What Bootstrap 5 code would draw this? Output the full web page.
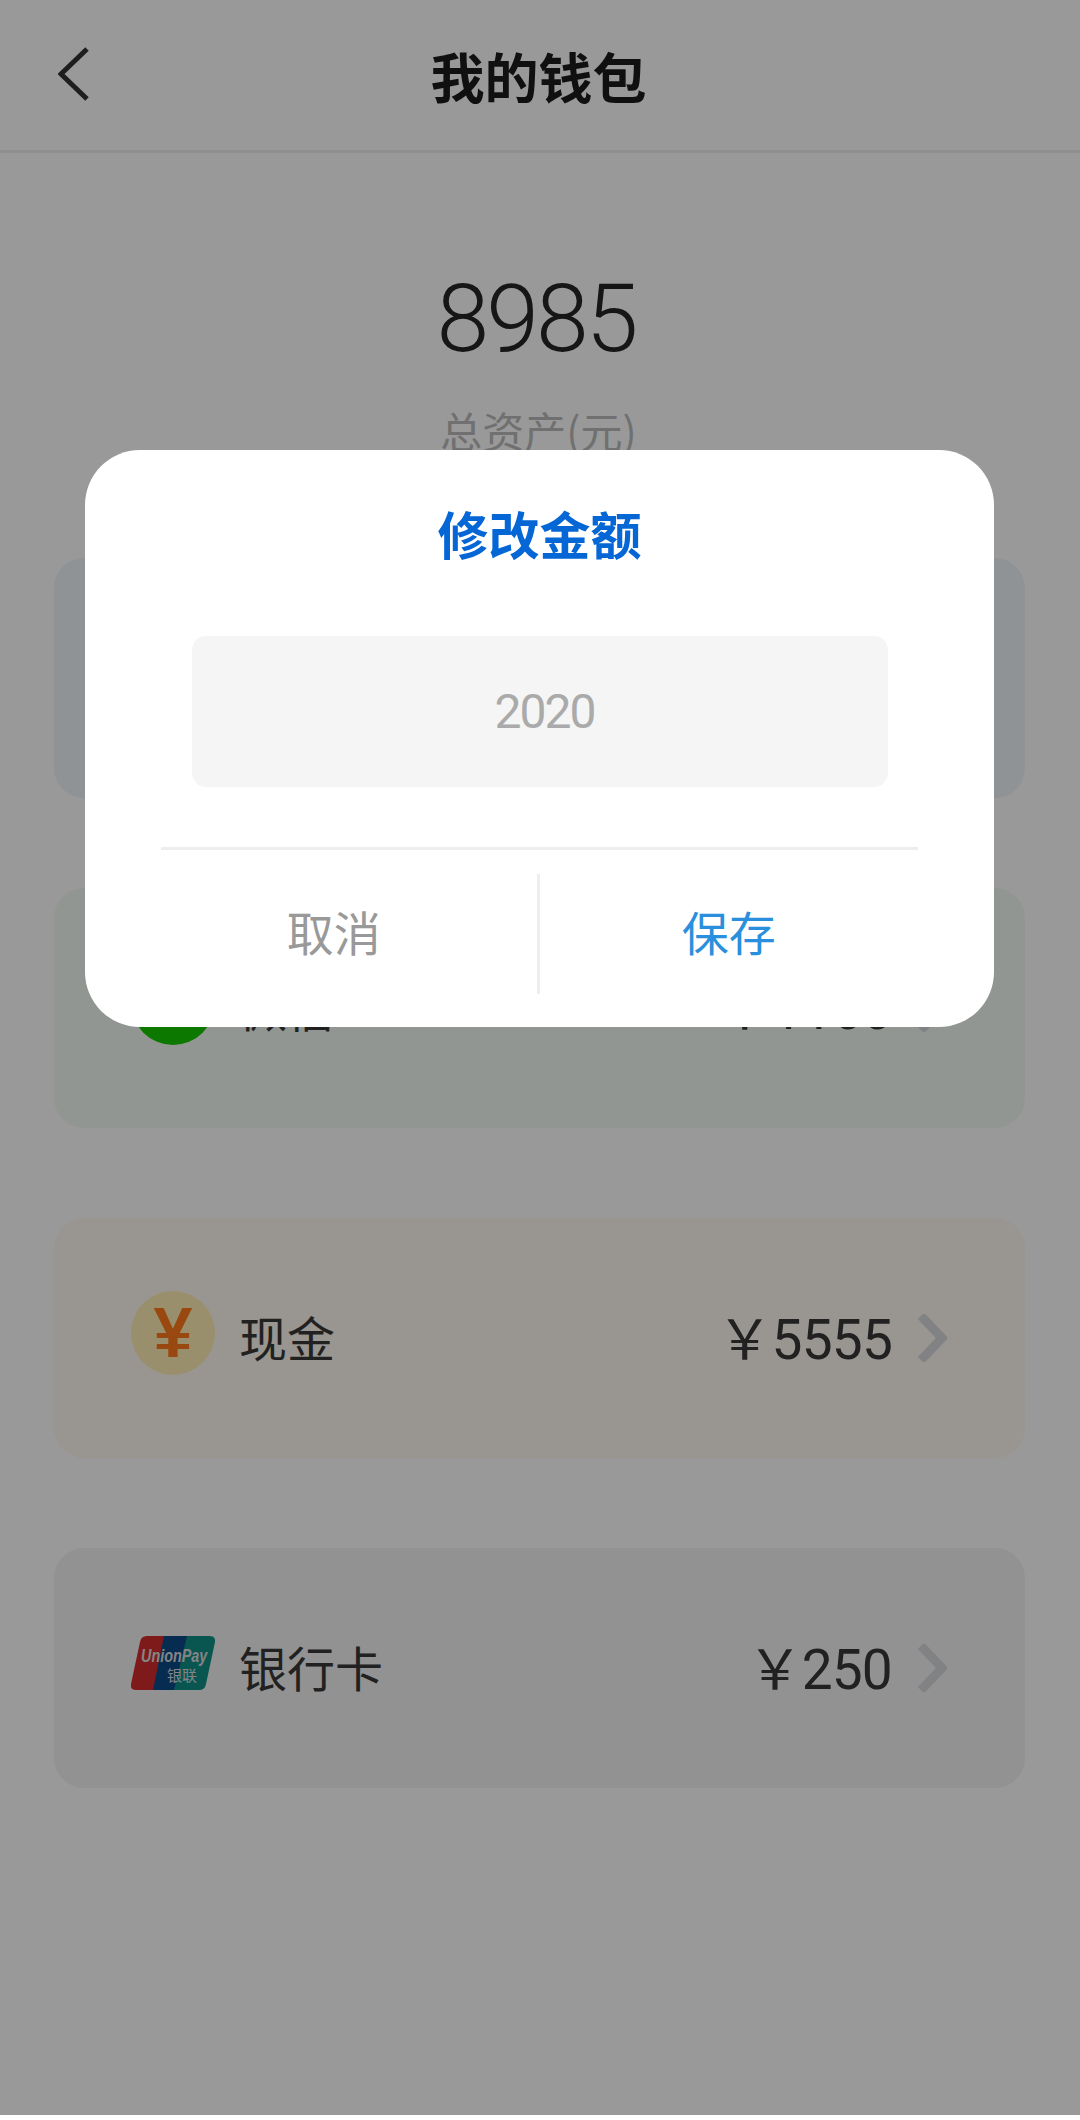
<!DOCTYPE html>
<html lang="zh-CN">
<head>
    <meta charset="UTF-8">
    <meta name="viewport" content="width=device-width, initial-scale=1.0">
    <title>我的钱包</title>
    <link href="https://cdn.jsdelivr.net/npm/bootstrap@5.3.0/dist/css/bootstrap.min.css" rel="stylesheet">
    <style>
        body {
            font-family: "Noto Sans CJK SC", "Noto Sans", sans-serif;
            background-color: #fff;
            color: #333;
        }
        .wallet-page { height: 2120px; overflow: hidden; }
        .top-bar {
            height: 153px;
            border-bottom: 3px solid #eeeeee;
            padding: 0 58px 2px 58px;
        }
        .top-side { flex: 1 1 0; }
        .top-title { font-size: 54px; font-weight: 700; line-height: 1; color: #1c1c1c; margin: 4px 0 0 -3px; }
        .total-box { height: 405px; padding-top: 111px; padding-right: 3px; }
        .total-num { font-family: Roboto, sans-serif; font-size: 95px; font-weight: 300; letter-spacing: -3px; line-height: 110px; color: #262626; padding-right: 5px; }
        .total-label { font-size: 42px; line-height: 56px; color: #bbbbbb; margin-top: 28px; }
        .cards-box { padding: 0 55px 0 54px; gap: 90px; }
        .money-card {
            height: 240px;
            border: 0;
            border-radius: 30px;
            padding: 0 78px 0 77px;
        }
        .money-card.blue-tint { background-color: #eff6fb; }
        .money-card.green-tint { background-color: #f2fbf3; }
        .money-card.orange-tint { background-color: #fff8f1; }
        .money-card.grey-tint { background-color: #f3f3f3; }
        .coin {
            width: 84px;
            height: 84px;
            border-radius: 50%;
            margin-bottom: 10px;
        }
        .coin-blue { background-color: #1a8fe3; color: #fff; font-size: 48px; font-weight: 700; }
        .coin-green { background-color: #16c800; }
        .coin-yen {
            background-color: #ffefb6;
            color: #ff7a1a;
            font-family: "Liberation Sans", sans-serif;
            font-size: 70px;
            font-weight: 700;
            line-height: 1;
        }
        .logo-union { margin-bottom: 10px; }
        .card-name { font-size: 48px; line-height: 1; margin-left: 24px; padding-bottom: 5px; color: #383838; }
        .card-sum {
            font-family: Roboto, "Noto Sans CJK SC", sans-serif;
            font-size: 55px;
            letter-spacing: -.8px;
            line-height: 1;
            color: #383838;
            margin-right: 25px;
            padding-top: 5px;
        }
        .cover {
            position: absolute;
            top: 0;
            left: 0;
            width: 100%;
            height: 2115px;
            background-color: rgba(0, 0, 0, .4);
            padding: 450px 1px 0 0;
        }
        .edit-box {
            width: 909px;
            height: 577px;
            background-color: #fff;
            border: 0;
            border-radius: 55px;
            padding: 0 76px;
        }
        .edit-title { font-size: 51px; font-weight: 700; line-height: 1; color: #0566d6; margin: 58px 0 77px; }
        .edit-input.form-control {
            width: 696px;
            height: 151px;
            margin: 0 auto 60px;
            padding: 0 0 0 10px;
            background-color: #f5f5f5;
            border: 0;
            border-radius: 14px;
            font-family: Roboto, sans-serif;
            font-size: 48px;
            letter-spacing: -2px;
            color: #aaaaaa;
        }
        .edit-actions { border-top: 3px solid #eeeeee; padding-top: 24px; }
        .edit-btn.btn {
            width: 50%;
            height: 120px;
            padding: 0 0 8px;
            border: 0;
            border-radius: 0;
            font-size: 47px;
            line-height: 1;
        }
        .edit-btn.btn-cancel { color: #999999; border-right: 3px solid #eeeeee; padding-right: 30px; }
        .edit-btn.btn-save { color: #2a8fdc; }
    </style>
</head>
<body>
    <div class="wallet-page position-relative">
        <!-- header -->
        <div class="top-bar d-flex align-items-center">
            <div class="top-side">
                <svg width="32" height="54" viewBox="0 0 32 54" class="d-block">
                    <polyline points="29,2 3,27 29,52" fill="none" stroke="#333" stroke-width="5"/>
                </svg>
            </div>
            <div class="top-title">我的钱包</div>
            <div class="top-side"></div>
        </div>

        <div class="total-box text-center">
            <div class="total-num">8985</div>
            <div class="total-label">总资产(元)</div>
        </div>

        <div class="cards-box d-flex flex-column">
            <div class="card money-card blue-tint flex-row align-items-center">
                <div class="coin coin-blue d-flex align-items-center justify-content-center">支</div>
                <div class="card-name">支付宝</div>
                <div class="card-sum ms-auto">&#xFFE5;2020</div>
                <svg width="30" height="48" viewBox="0 0 30 48"><polyline points="4,2 25,24 4,46" fill="none" stroke="#d8d9dd" stroke-width="9"/></svg>
            </div>
            <div class="card money-card green-tint flex-row align-items-center">
                <div class="coin coin-green"></div>
                <div class="card-name">微信</div>
                <div class="card-sum ms-auto">&#xFFE5;1160</div>
                <svg width="30" height="48" viewBox="0 0 30 48"><polyline points="4,2 25,24 4,46" fill="none" stroke="#d8d9dd" stroke-width="9"/></svg>
            </div>
            <div class="card money-card orange-tint flex-row align-items-center">
                <div class="coin coin-yen d-flex align-items-center justify-content-center">¥</div>
                <div class="card-name">现金</div>
                <div class="card-sum ms-auto">&#xFFE5;5555</div>
                <svg width="30" height="48" viewBox="0 0 30 48"><polyline points="4,2 25,24 4,46" fill="none" stroke="#d8d9dd" stroke-width="9"/></svg>
            </div>
            <div class="card money-card grey-tint flex-row align-items-center">
                <svg class="logo-union" width="84" height="54" viewBox="0 0 84 54">
                    <path d="M15 0H38L27 54H5Q-1 54 0 48L9 6Q10 0 16 0Z" fill="#d42c2c"/>
                    <path d="M33 0H58L47 54H22Z" fill="#0c4a88"/>
                    <path d="M56 0H78Q85 0 84 6L75 48Q74 54 68 54H43Z" fill="#0f8f88"/>
                    <text transform="translate(10 26) scale(.8 1)" font-family="Liberation Sans, sans-serif" font-size="18" font-style="italic" font-weight="700" fill="#dddddd">UnionPay</text>
                    <text x="36" y="45" font-family="Noto Sans CJK SC, sans-serif" font-size="15" fill="#dddddd">银联</text>
                </svg>
                <div class="card-name">银行卡</div>
                <div class="card-sum ms-auto">&#xFFE5;250</div>
                <svg width="30" height="48" viewBox="0 0 30 48"><polyline points="4,2 25,24 4,46" fill="none" stroke="#d8d9dd" stroke-width="9"/></svg>
            </div>
        </div>

        <!-- dialog over the page -->
        <div class="cover d-flex justify-content-center align-items-start">
            <div class="edit-box">
                <div class="edit-title text-center">修改金额</div>
                <div class="edit-input form-control d-flex align-items-center justify-content-center">2020</div>
                <div class="edit-actions d-flex">
                    <button type="button" class="btn edit-btn btn-cancel">取消</button>
                    <button type="button" class="btn edit-btn btn-save">保存</button>
                </div>
            </div>
        </div>
    </div>
    <script src="https://cdn.jsdelivr.net/npm/bootstrap@5.3.0/dist/js/bootstrap.bundle.min.js"></script>
</body>
</html>
